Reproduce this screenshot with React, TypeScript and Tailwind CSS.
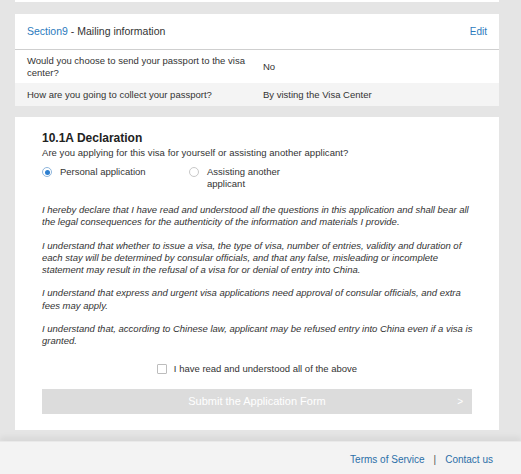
export default function App() {
  const paragraphs = [
    "I hereby declare that I have read and understood all the questions in this application and shall bear all the legal consequences for the authenticity of the information and materials I provide.",
    "I understand that whether to issue a visa, the type of visa, number of entries, validity and duration of each stay will be determined by consular officials, and that any false, misleading or incomplete statement may result in the refusal of a visa for or denial of entry into China.",
    "I understand that express and urgent visa applications need approval of consular officials, and extra fees may apply.",
    "I understand that, according to Chinese law, applicant may be refused entry into China even if a visa is granted.",
  ];

  return (
    <div className="min-h-[474px] bg-[#e5e5e5] font-['Liberation_Sans',Arial,sans-serif] text-[#333] flex flex-col">
      <div className="pl-[15px] pr-[22px] flex flex-col">
        {/* previous card tail */}
        <div className="h-[2px] bg-white" />

        {/* section 9 */}
        <div className="mt-[12px] bg-white">
          <div className="h-[36px] flex items-center justify-between px-[12px] border-b border-[#cfcfcf] text-[10.5px]">
            <div>
              <span className="text-[#2b7bbd]">Section9</span> - Mailing information
            </div>
            <a className="text-[#2b7bbd] text-[10px]">Edit</a>
          </div>
          <div className="flex items-center h-[33px] px-[12px] text-[9.5px] leading-[12px]">
            <div className="w-[236px] pr-[12px]">Would you choose to send your passport to the visa center?</div>
            <div>No</div>
          </div>
          <div className="flex items-center h-[23px] px-[12px] bg-[#f4f4f4] text-[9.5px] leading-[12px]">
            <div className="w-[236px] pr-[12px]">How are you going to collect your passport?</div>
            <div>By visting the Visa Center</div>
          </div>
        </div>

        {/* declaration */}
        <div className="mt-[11px] bg-white px-[27px] pt-[14px] pb-[16px]">
          <h2 className="font-bold text-[12px] leading-[14px] text-[#222]">10.1A Declaration</h2>
          <p className="mt-[2px] text-[9.5px] leading-[12px] tracking-[0.05px]">
            Are you applying for this visa for yourself or assisting another applicant?
          </p>
          <div className="mt-[7px] flex text-[9.5px] leading-[12px]">
            <label className="flex items-start w-[147px]">
              <span className="mt-[1px] w-[10px] h-[10px] rounded-full border border-[#8fb6dc] bg-white flex items-center justify-center">
                <span className="w-[5px] h-[5px] rounded-full bg-[#2d7fd0]" />
              </span>
              <span className="ml-[8px]">Personal application</span>
            </label>
            <label className="flex items-start">
              <span className="mt-[1px] w-[10px] h-[10px] rounded-full border border-[#c8c8c8] bg-white" />
              <span className="ml-[8px] w-[80px]">Assisting another applicant</span>
            </label>
          </div>

          <div className="mt-[14px] mr-[-2px] flex flex-col gap-[11px] italic text-[9.5px] leading-[12.3px] text-[#333]">
            {paragraphs.map((p, i) => (
              <p key={i}>{p}</p>
            ))}
          </div>

          <label className="mt-[14px] flex items-center justify-center text-[9.5px]">
            <span className="w-[10px] h-[10px] border border-[#bdbdbd] rounded-[1px] bg-white" />
            <span className="ml-[7px]">I have read and understood all of the above</span>
          </label>

          <button
            disabled
            className="mt-[13px] w-full h-[25px] bg-[#dcdcdc] text-white text-[11px] flex items-center relative"
          >
            <span className="flex-1 text-center">Submit the Application Form</span>
            <span className="absolute right-[9px] text-[10px]">&gt;</span>
          </button>
        </div>
      </div>

      <div className="mt-[11px] flex-1 bg-[#f3f3f3] shadow-[0_-4px_6px_rgba(0,0,0,0.06)] border-t border-[#e9e9e9] flex items-start justify-end pr-[28px] pt-[10px] text-[10px] text-[#2b6fa8]">
        <a>Terms of Service</a>
        <span className="mx-[9px] text-[#555]">|</span>
        <a>Contact us</a>
      </div>
    </div>
  );
}
